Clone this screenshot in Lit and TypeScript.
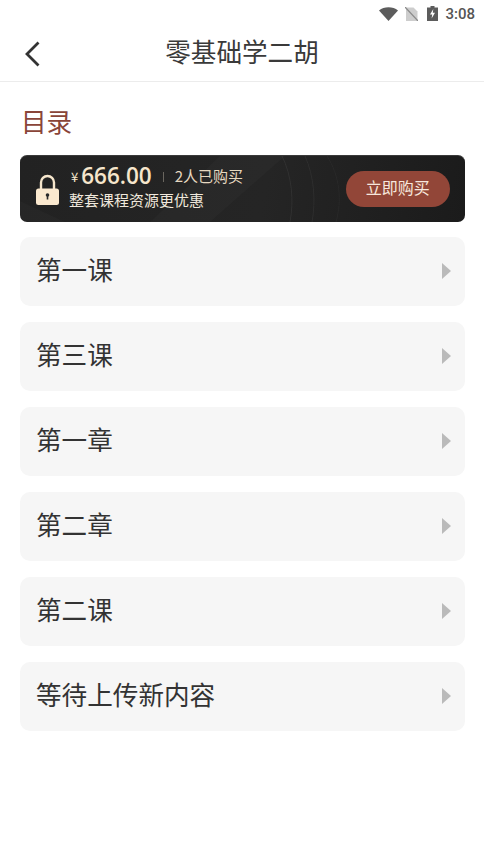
import { LitElement, html, css } from "lit";
import { customElement } from "lit/decorators.js";

const ITEMS = ["第一课", "第三课", "第一章", "第二章", "第二课", "等待上传新内容"];

@customElement("app-root")
export class AppRoot extends LitElement {
  static styles = css`
    :host {
      display: block;
      width: 484px;
      height: 860px;
      background: #fff;
      font-family: "Noto Sans CJK SC", "Roboto", sans-serif;
      color: #333;
      overflow: hidden;
    }
    .status {
      height: 27px;
      display: flex;
      align-items: center;
      justify-content: flex-end;
      padding-right: 9px;
      box-sizing: border-box;
    }
    .status svg { display: block; }
    .wifi { margin-right: 7px; }
    .sim { margin-right: 9px; }
    .batt { margin-right: 7px; }
    .time {
      font-family: Roboto, sans-serif;
      font-size: 15px;
      font-weight: 500;
      color: #555;
    }
    .nav {
      height: 55px;
      box-sizing: border-box;
      border-bottom: 1px solid #ececec;
      display: grid;
      grid-template-columns: 64px 1fr 64px;
      align-items: center;
    }
    .back { padding-left: 24px; display: flex; }
    .title {
      text-align: center;
      font-size: 25.6px;
      line-height: 32px;
      color: #3a3a3a;
      padding-bottom: 6px;
    }
    .main { padding: 0 19px 0 20px; }
    .heading {
      font-size: 25.6px;
      line-height: 36px;
      color: #8a4538;
      margin: 21px 0 16px 1px;
    }
    .banner {
      position: relative;
      height: 67px;
      border-radius: 7px;
      background: linear-gradient(100deg, #222 0%, #252525 55%, #1b1b1b 100%);
      border-top: 1px solid #3a3a3a;
      box-sizing: border-box;
      display: flex;
      align-items: center;
      overflow: hidden;
      padding: 0 15.5px 0 16px;
    }
    .decor { position: absolute; inset: 0; }
    .lock { position: relative; flex: none; }
    .info {
      position: relative;
      margin-left: 10px;
      flex: 1;
      display: flex;
      flex-direction: column;
      gap: 0;
      padding-bottom: 8px;
    }
    .price-row {
      display: flex;
      align-items: center;
      height: 30px;
      color: #f6e6cc;
      margin-left: 2px;
    }
    .yen { font-size: 13px; margin-right: 3px; margin-top: 1px; }
    .price {
      font-family: "Open Sans", Roboto, sans-serif;
      font-size: 22.5px;
      font-weight: 600;
      line-height: 30px;
    }
    .sep { width: 1px; height: 10px; background: #6a665f; margin: 2px 11px 0 11px; }
    .buyers { font-size: 15px; color: #e6d8c0; line-height: 20px; }
    .sub { font-size: 15px; color: #f0e8dc; line-height: 18px; }
    .buy {
      position: relative;
      width: 103.5px;
      height: 35.5px;
      border-radius: 18px;
      background: #924638;
      color: #f6e6dc;
      font-size: 16px;
      line-height: 20px;
      display: flex;
      align-items: center;
      justify-content: center;
      padding-bottom: 4px;
      box-sizing: border-box;
    }
    .list {
      display: flex;
      flex-direction: column;
      gap: 16px;
      margin-top: 14.5px;
    }
    .item {
      height: 69px;
      border-radius: 10px;
      background: #f6f6f6;
      display: flex;
      align-items: center;
      justify-content: space-between;
      padding: 0 14.5px 0 16px;
      font-size: 25.6px;
      color: #333;
    }
    .label { padding-bottom: 5px; }
    .arrow {
      width: 0;
      height: 0;
      border-left: 9.5px solid #bababa;
      border-top: 8.5px solid transparent;
      border-bottom: 8.5px solid transparent;
    }
  `;

  render() {
    return html`
      <div class="status">
        <svg class="wifi" width="19" height="14" viewBox="0 0 19 14"><path d="M0 3.5 C5 -0.8 14 -0.8 19 3.5 L9.5 14 Z" fill="#5c5c5c"/></svg>
        <svg class="sim" width="13" height="14" viewBox="0 0 13 14"><path d="M1 0.5 H8.5 L12.5 4.5 V14 H1 Z" fill="#cdcdcd"/><path d="M0 0 L13 14" stroke="#8a8a8a" stroke-width="1.2"/></svg>
        <svg class="batt" width="11" height="15" viewBox="0 0 11 15"><path d="M3.5 0 H7.5 V1.5 H11 V15 H0 V1.5 H3.5 Z" fill="#5c5c5c"/><path d="M6.3 3 L3 8.6 H5.2 L4.6 12.6 L8 6.8 H5.8 Z" fill="#fff"/></svg>
        <span class="time">3:08</span>
      </div>
      <div class="nav">
        <div class="back">
          <svg width="18" height="28" viewBox="0 0 18 28"><path d="M14.5 2.5 L3 14 L14.5 25.5" fill="none" stroke="#333" stroke-width="2.8"/></svg>
        </div>
        <div class="title">零基础学二胡</div>
        <div></div>
      </div>
      <div class="main">
        <div class="heading">目录</div>
        <div class="banner">
          <svg class="decor" width="445" height="66" viewBox="0 0 445 66">
            <path d="M0 66 L0 45 L45 66 Z" fill="#fff" opacity="0.02"/>
            <path d="M190 66 L265 0 L200 0 L130 66 Z" fill="#fff" opacity="0.02"/>
            <path d="M262 0 C272 20 274 45 270 66" fill="none" stroke="#fff" stroke-opacity="0.06"/>
            <path d="M285 0 C294 20 296 45 292 66" fill="none" stroke="#fff" stroke-opacity="0.05"/>
            <path d="M307 0 C320 20 322 45 316 66" fill="none" stroke="#fff" stroke-opacity="0.03"/>
          </svg>
          <svg class="lock" width="23" height="31" viewBox="0 0 23 31">
            <path d="M5 16 V8.5 a6.5 6.5 0 0 1 13 0 V16" fill="none" stroke="#f6e6cc" stroke-width="2.4"/>
            <rect x="0" y="14.5" width="23" height="16.5" rx="2.5" fill="#fbe9cf"/>
            <circle cx="11.5" cy="21" r="1.8" fill="#2a2a2a"/>
            <rect x="10.7" y="21.5" width="1.6" height="4" fill="#2a2a2a"/>
          </svg>
          <div class="info">
            <div class="price-row">
              <span class="yen">¥</span><span class="price">666.00</span><span class="sep"></span><span class="buyers">2人已购买</span>
            </div>
            <div class="sub">整套课程资源更优惠</div>
          </div>
          <div class="buy">立即购买</div>
        </div>
        <div class="list">
          ${ITEMS.map((t) => html`<div class="item"><span class="label">${t}</span><span class="arrow"></span></div>`)}
        </div>
      </div>
    `;
  }
}
